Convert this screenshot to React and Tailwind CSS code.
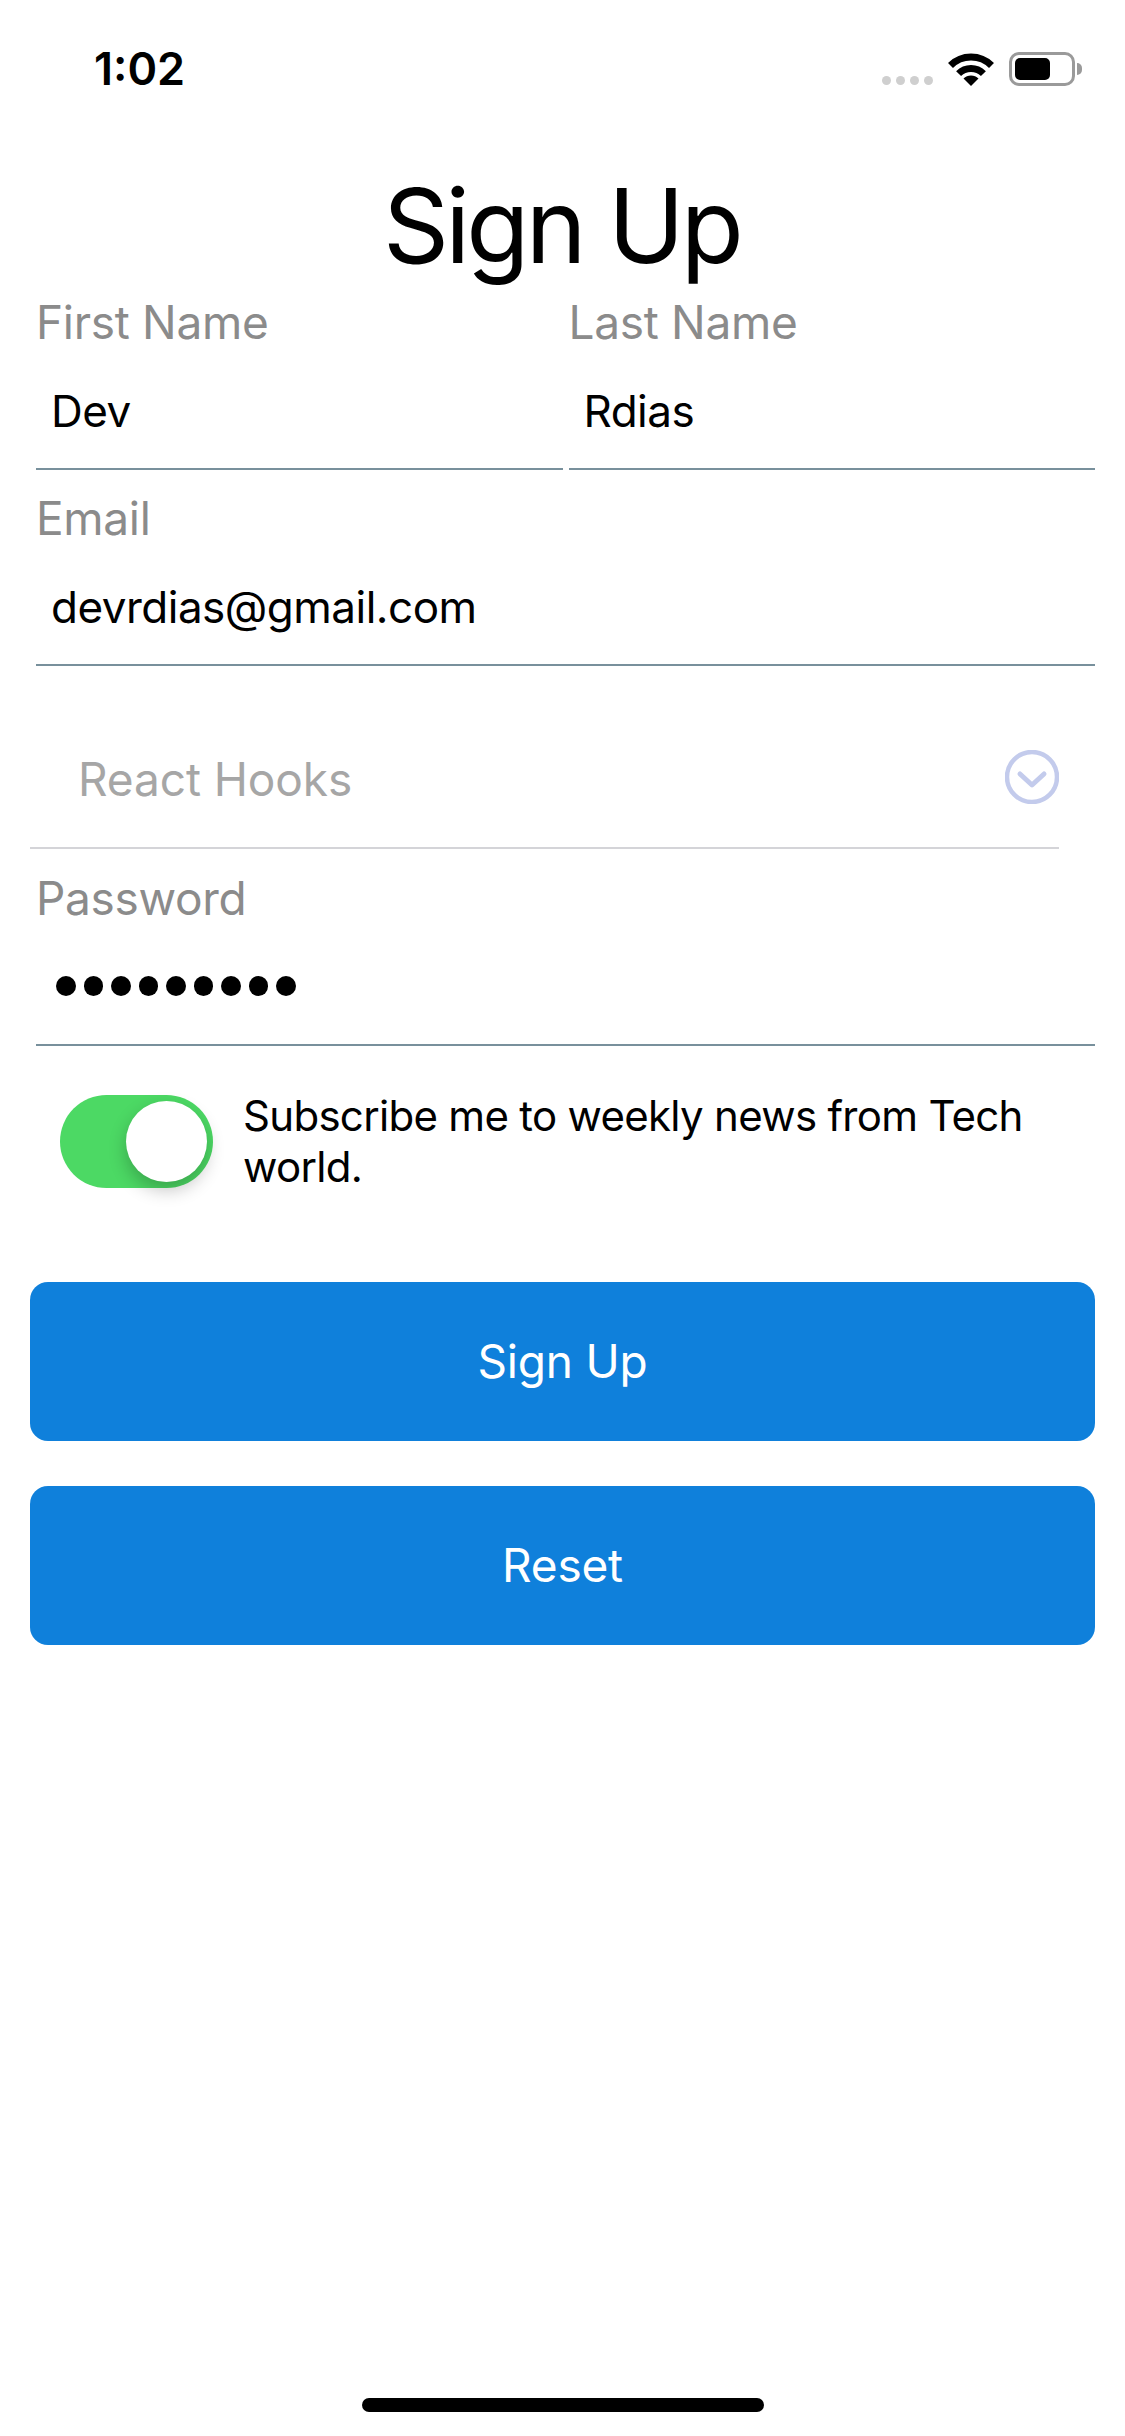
const Field = ({ label, value, className = '', dots = false }) => (
  <div className={`min-w-0 flex-1 ${className}`}>
    <div className="h-[64px] text-[46px] leading-[64px] tracking-[-0.3px] text-[#8b8b8b]">{label}</div>
    <div className="flex h-[116px] items-center border-b-2 border-[#78909c] pl-[15px] text-[44px] tracking-[-0.5px] text-black">
      {dots ? (
        <div className="flex gap-[8px] pl-[5px] pb-[2px]">
          {Array.from({ length: 9 }).map((_, i) => (
            <span key={i} className="h-[20px] w-[19.5px] rounded-full bg-black" />
          ))}
        </div>
      ) : (
        value
      )}
    </div>
  </div>
);

const StatusBar = () => (
  <div className="flex h-[132px] items-start justify-between pt-[45px] pl-[94px] pr-[43px]">
    <span className="text-[45px] font-semibold leading-[48px] text-black">1:02</span>
    <div className="flex items-end pt-[7px]">
      <div className="mb-[1px] flex gap-[5px]">
        {[0, 1, 2, 3].map((i) => (
          <span key={i} className="h-[9px] w-[9px] rounded-full bg-[#cfcfcf]" />
        ))}
      </div>
      <svg className="ml-[15px]" width="46" height="33" viewBox="0 0 46 33">
        <path d="M2.5 12.5A29 29 0 0 1 43.5 12.5" fill="none" stroke="#000" strokeWidth="7" />
        <path d="M10.6 20.6A17.5 17.5 0 0 1 35.4 20.6" fill="none" stroke="#000" strokeWidth="7" />
        <path d="M23 33L15.5 25.5A10.6 10.6 0 0 1 30.5 25.5Z" fill="#000" />
      </svg>
      <div className="ml-[15px] flex items-center">
        <div className="h-[34px] w-[66px] rounded-[10px] border-[3px] border-[#9a9a9a] p-[3px]">
          <div className="h-full w-[35px] rounded-[5px] bg-black" />
        </div>
        <div className="ml-[2px] h-[12px] w-[5px] rounded-r-full bg-[#9a9a9a]" />
      </div>
    </div>
  </div>
);

export default function App() {
  return (
    <div className="relative h-[2436px] w-[1125px] bg-white" style={{ fontFamily: 'Inter, "Liberation Sans", sans-serif' }}>
      <StatusBar />

      <h1 className="h-[158px] pt-[31px] pr-[2px] text-center text-[103px] font-normal leading-[125px] tracking-[-3.8px] text-black">Sign Up</h1>

      <div className="pl-[36px] pr-[30px]">
        <div className="flex gap-[6px]">
          <Field label="First Name" value="Dev" />
          <Field label="Last Name" value="Rdias" />
        </div>
        <Field className="mt-[16px]" label="Email" value="devrdias@gmail.com" />
      </div>

      {/* Select */}
      <div className="ml-[30px] flex h-[183px] w-[1029px] items-center justify-between border-b-2 border-[#d4d4d8] pt-[40px] pl-[48px] text-[46px] tracking-[-0.1px] text-[#a6a6a6]">
        <span className="pt-[6px]">React Hooks</span>
        <svg width="54" height="54" viewBox="0 0 54 54" fill="none" stroke="#c3cbec" strokeWidth="4.5">
          <circle cx="27" cy="27" r="25" />
          <path d="M15 24L27 35L39 24" strokeWidth="5" strokeLinecap="round" strokeLinejoin="round" />
        </svg>
      </div>

      <div className="mt-[17px] pl-[36px] pr-[30px]">
        <Field label="Password" dots />
      </div>

      {/* Subscribe toggle */}
      <div className="ml-[60px] mt-[49px] flex h-[93px] items-start">
        <div className="relative h-[93px] w-[153px] shrink-0 rounded-full bg-[#4cd964]">
          <div className="absolute left-[66px] top-[6px] h-[81px] w-[81px] rounded-full bg-white shadow-[0_8px_18px_rgba(0,0,0,0.24)]" />
        </div>
        <p className="ml-[30px] -mt-[5px] w-[820px] text-[42px] leading-[51px] tracking-[-0.7px] text-black">Subscribe me to weekly news from Tech world.</p>
      </div>

      <div className="mt-[94px] flex flex-col gap-[45px] pl-[30px] pr-[30px]">
        <button className="h-[159px] rounded-[18px] bg-[#0f80db] text-[46px] tracking-[-0.2px] text-white">Sign Up</button>
        <button className="h-[159px] rounded-[18px] bg-[#0f80db] text-[46px] tracking-[-0.2px] text-white">Reset</button>
      </div>

      {/* Home indicator */}
      <div className="absolute bottom-[24px] left-[362px] h-[14px] w-[402px] rounded-full bg-black" />
    </div>
  );
}
